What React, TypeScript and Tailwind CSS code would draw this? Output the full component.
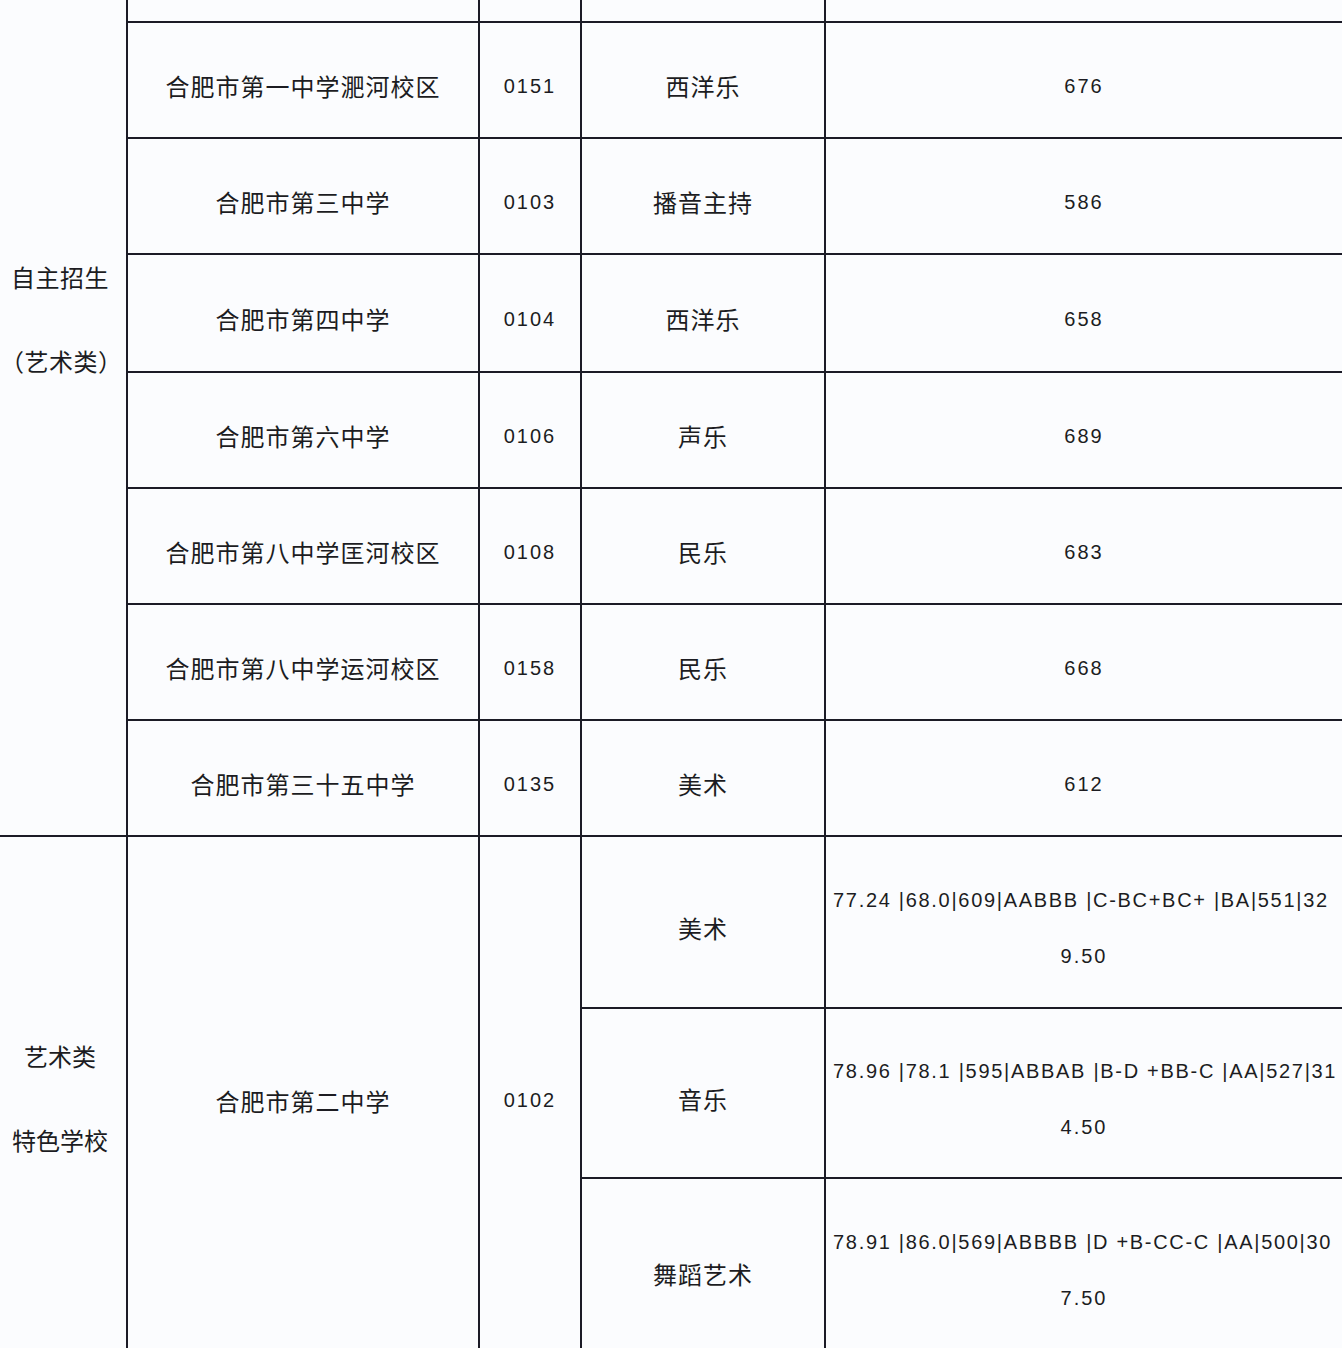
import React from 'react';

interface SchoolRow {
  name: string;
  code: string;
  major: string;
  score: string;
}

const cjk = "font-['Noto_Sans_CJK_SC','Noto_Sans',sans-serif]";
const num = "font-['Liberation_Sans','Arial',sans-serif]";

const rows: SchoolRow[] = [
  { name: '合肥市第一中学淝河校区', code: '0151', major: '西洋乐', score: '676' },
  { name: '合肥市第三中学', code: '0103', major: '播音主持', score: '586' },
  { name: '合肥市第四中学', code: '0104', major: '西洋乐', score: '658' },
  { name: '合肥市第六中学', code: '0106', major: '声乐', score: '689' },
  { name: '合肥市第八中学匡河校区', code: '0108', major: '民乐', score: '683' },
  { name: '合肥市第八中学运河校区', code: '0158', major: '民乐', score: '668' },
  { name: '合肥市第三十五中学', code: '0135', major: '美术', score: '612' },
];

const specials = [
  { major: '美术', line1: '77.24 |68.0|609|AABBB |C-BC+BC+ |BA|551|32', line2: '9.50' },
  { major: '音乐', line1: '78.96 |78.1 |595|ABBAB |B-D +BB-C |AA|527|31', line2: '4.50' },
  { major: '舞蹈艺术', line1: '78.91 |86.0|569|ABBBB |D +B-CC-C |AA|500|30', line2: '7.50' },
];

const cell = 'bg-[#fbfcfe] flex items-center justify-center pt-3 text-[#1c1c22]';

const App: React.FC = () => {
  return (
    <div className="w-[1342px] h-[1348px] overflow-hidden bg-[#fbfcfe]">
      <div className="grid grid-cols-[126px_350px_100px_242px_516px] grid-rows-[21px_114px_114px_116px_114px_114px_114px_114px_170px_168px_200px] gap-[2px] bg-[#1b1b26]">
        {/* merged first column, upper section */}
        <div className={`row-span-8 bg-[#fbfcfe] flex flex-col items-center pr-[6px] pt-[262px] gap-[54px] text-[24px] leading-[30px] text-[#1c1c22] ${cjk}`}>
          <span className="tracking-[0.5px]">自主招生</span>
          <span className="tracking-[0.5px]">（艺术类）</span>
        </div>

        {/* partial row cut by the top edge */}
        <div className="bg-[#fbfcfe]" />
        <div className="bg-[#fbfcfe]" />
        <div className="bg-[#fbfcfe]" />
        <div className="bg-[#fbfcfe]" />

        {rows.map((r) => (
          <React.Fragment key={r.code}>
            <div className={`${cell} ${cjk} text-[24px] tracking-[1px]`}>{r.name}</div>
            <div className={`${cell} ${num} text-[20px] tracking-[2px]`}>{r.code}</div>
            <div className={`${cell} ${cjk} text-[24px] tracking-[1px]`}>{r.major}</div>
            <div className={`${cell} ${num} text-[20px] tracking-[2px]`}>{r.score}</div>
          </React.Fragment>
        ))}

        {/* art specialty school section */}
        <div className={`row-span-3 bg-[#fbfcfe] flex flex-col items-center justify-start pr-[6px] pt-[204px] gap-[54px] text-[24px] leading-[30px] text-[#1c1c22] ${cjk}`}>
          <span>艺术类</span>
          <span>特色学校</span>
        </div>
        <div className={`row-span-3 ${cell} items-start pt-[246px] ${cjk} text-[24px] tracking-[1px]`}>合肥市第二中学</div>
        <div className={`row-span-3 ${cell} items-start pt-[248px] ${num} text-[20px] tracking-[2px]`}>0102</div>

        {specials.map((s, i) => (
          <React.Fragment key={s.major}>
            <div className={`${cell} ${cjk} text-[24px] tracking-[1px] ${i === 2 ? 'items-start pt-[77px]' : ''}`}>{s.major}</div>
            <div className={`bg-[#fbfcfe] flex flex-col justify-center pt-3 overflow-hidden text-[#1c1c22] ${num} text-[20px] leading-[56px] ${i === 2 ? 'justify-start pt-[35px]' : ''}`}>
              <div className="whitespace-nowrap pl-[7px] tracking-[1.7px]">{s.line1}</div>
              <div className="text-center tracking-[2px]">{s.line2}</div>
            </div>
          </React.Fragment>
        ))}
      </div>
    </div>
  );
};

export default App;
